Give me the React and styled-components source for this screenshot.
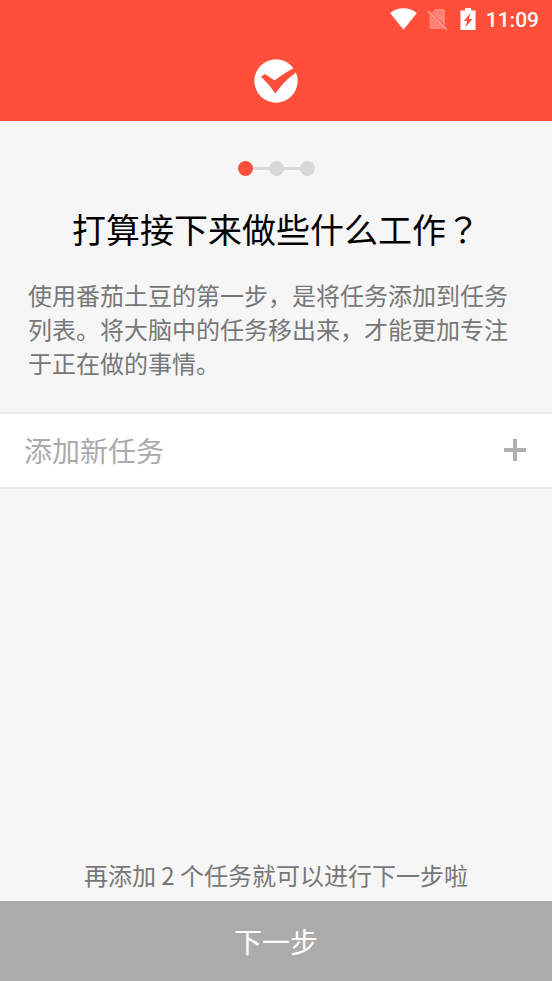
import React, { useState } from 'react'
import styled, { createGlobalStyle } from 'styled-components'

const App = () => {
  const [task, setTask] = useState('')

  return (
    <Page>
      <GlobalStyle />

      <Header>
        <StatusBar>
          <WifiIcon />
          <NoSimIcon />
          <BatteryIcon />
          <Clock>11:09</Clock>
        </StatusBar>
        <Brand>
          <Logo />
        </Brand>
      </Header>

      <Main>
        <Intro>
          <Steps>
            <Step $active />
            <StepLine />
            <Step />
            <StepLine />
            <Step />
          </Steps>
          <Title>打算接下来做些什么工作<Mark>？</Mark></Title>
          <Description>
            使用番茄土豆的第一步，是将任务添加到任务列表。将大脑中的任务移出来，才能更加专注于正在做的事情。
          </Description>
        </Intro>

        <TaskForm onSubmit={(e) => e.preventDefault()}>
          <TaskInput
            aria-label="添加新任务"
            placeholder="添加新任务"
            value={task}
            onChange={(e) => setTask(e.target.value)}
          />
          <AddButton type="submit" aria-label="添加">
            <PlusIcon />
          </AddButton>
        </TaskForm>

        <Hint>再添加 2 个任务就可以进行下一步啦</Hint>
      </Main>

      <NextButton type="button">下一步</NextButton>
    </Page>
  )
}

const WifiIcon = () => (
  <svg width="28" height="24" viewBox="0 0 28 24" aria-hidden="true">
    <path d="M13.500 21.800 0.100 4.900C3.700 1.800 8.300 0.200 13.500 0.200s9.800 1.600 13.400 4.700z" fill="#fff" />
  </svg>
)

const NoSimIcon = () => (
  <svg width="22" height="24" viewBox="1 0 22 24" aria-hidden="true">
    <g fill="#fff" opacity="0.3">
      <path d="M8.500 1H16.500Q18 1 18 2.500V17.500L4.800 4.700z" />
      <path d="M2.500 6.500 17 21H4Q2.500 21 2.500 19.500z" />
    </g>
    <path d="M1 3 19.500 21.500" stroke="#fff" strokeWidth="1.800" opacity="0.45" />
  </svg>
)

const BatteryIcon = () => (
  <svg width="16" height="24" viewBox="0 0 16 24" aria-hidden="true">
    <path d="M5 0H11V2.500H15.500V22H.5V2.500H5z" fill="#fff" />
    <path d="M10.500 5 4 13H7.200L5.300 19.200 12.600 11H9z" fill="#ff4e3a" />
  </svg>
)

const Logo = () => (
  <svg width="44" height="44" viewBox="0 0 44 44" aria-hidden="true">
    <circle cx="22" cy="22" r="21.700" fill="#fff" />
    <path
      d="M7 17.800 11 15 20.700 21.600Q28 15.500 39 9.500L43.500 5 45 12 42.500 13Q30.500 21.500 21.300 34.500 15.500 25.500 7 17.800z"
      fill="#ff4e3a"
    />
  </svg>
)

const PlusIcon = () => (
  <svg width="22" height="22" viewBox="0 0 22 22" aria-hidden="true">
    <path d="M11 0V22M0 11H22" stroke="#b0b0b0" strokeWidth="4" />
  </svg>
)

const GlobalStyle = createGlobalStyle`
  body {
    margin: 0;
    background: #f6f6f6;
    font-family: "Noto Sans CJK SC", "Noto Sans", sans-serif;
  }

  * {
    box-sizing: border-box;
  }

  button, input {
    font-family: inherit;
  }
`

const Page = styled.div`
  display: flex;
  flex-direction: column;
  min-height: 100vh;
`

const Header = styled.header`
  background: #ff4e3a;
  color: #fff;
`

const StatusBar = styled.div`
  display: flex;
  align-items: center;
  justify-content: flex-end;
  height: 40px;
  padding: 0 13px;
  gap: 10px;
`

const Clock = styled.span`
  font-family: Roboto, sans-serif;
  font-size: 21px;
  font-weight: 500;
`

const Brand = styled.div`
  display: flex;
  justify-content: center;
  padding: 19px 0 18px;

  svg {
    display: block;
  }
`

const Main = styled.main`
  display: flex;
  flex-direction: column;
  flex: 1;
`

const Intro = styled.section`
  padding: 40px 28px 32px;
`

const Steps = styled.div`
  display: flex;
  align-items: center;
  justify-content: center;
`

const Step = styled.span`
  width: 15px;
  height: 15px;
  border-radius: 50%;
  background: ${(props) => (props.$active ? '#ff4e3a' : '#d8d8d8')};
`

const StepLine = styled.span`
  width: 16px;
  height: 3px;
  background: #d8d8d8;
`

const Title = styled.h1`
  margin: 28px 0 24px;
  font-size: 34px;
  font-weight: 400;
  line-height: 50px;
  text-align: center;
  color: #000;
`

/* the Japanese face sets the question mark in the middle of its square */
const Mark = styled.span`
  font-family: "Noto Sans CJK JP", sans-serif;
`

const Description = styled.p`
  margin: 0;
  font-size: 24px;
  line-height: 34px;
  color: #777;
`

const TaskForm = styled.form`
  display: flex;
  align-items: center;
  height: 77px;
  padding: 0 24px 2px;
  background: #fff;
  border-top: 2px solid #ebebeb;
  border-bottom: 2px solid #ebebeb;
`

const TaskInput = styled.input`
  flex: 1;
  min-width: 0;
  padding: 0;
  border: none;
  outline: none;
  background: transparent;
  font-size: 28px;
  color: #333;

  &::placeholder {
    color: #aaa;
    opacity: 1;
  }
`

const AddButton = styled.button`
  display: flex;
  padding: 2px;
  border: none;
  background: transparent;
  cursor: pointer;
`

const Hint = styled.p`
  margin: auto 0 9px;
  font-size: 24px;
  line-height: 34px;
  text-align: center;
  color: #777;
`

const NextButton = styled.button`
  height: 80px;
  border: none;
  background: #ababab;
  color: #fff;
  font-size: 28px;
  cursor: pointer;
`

export default App
